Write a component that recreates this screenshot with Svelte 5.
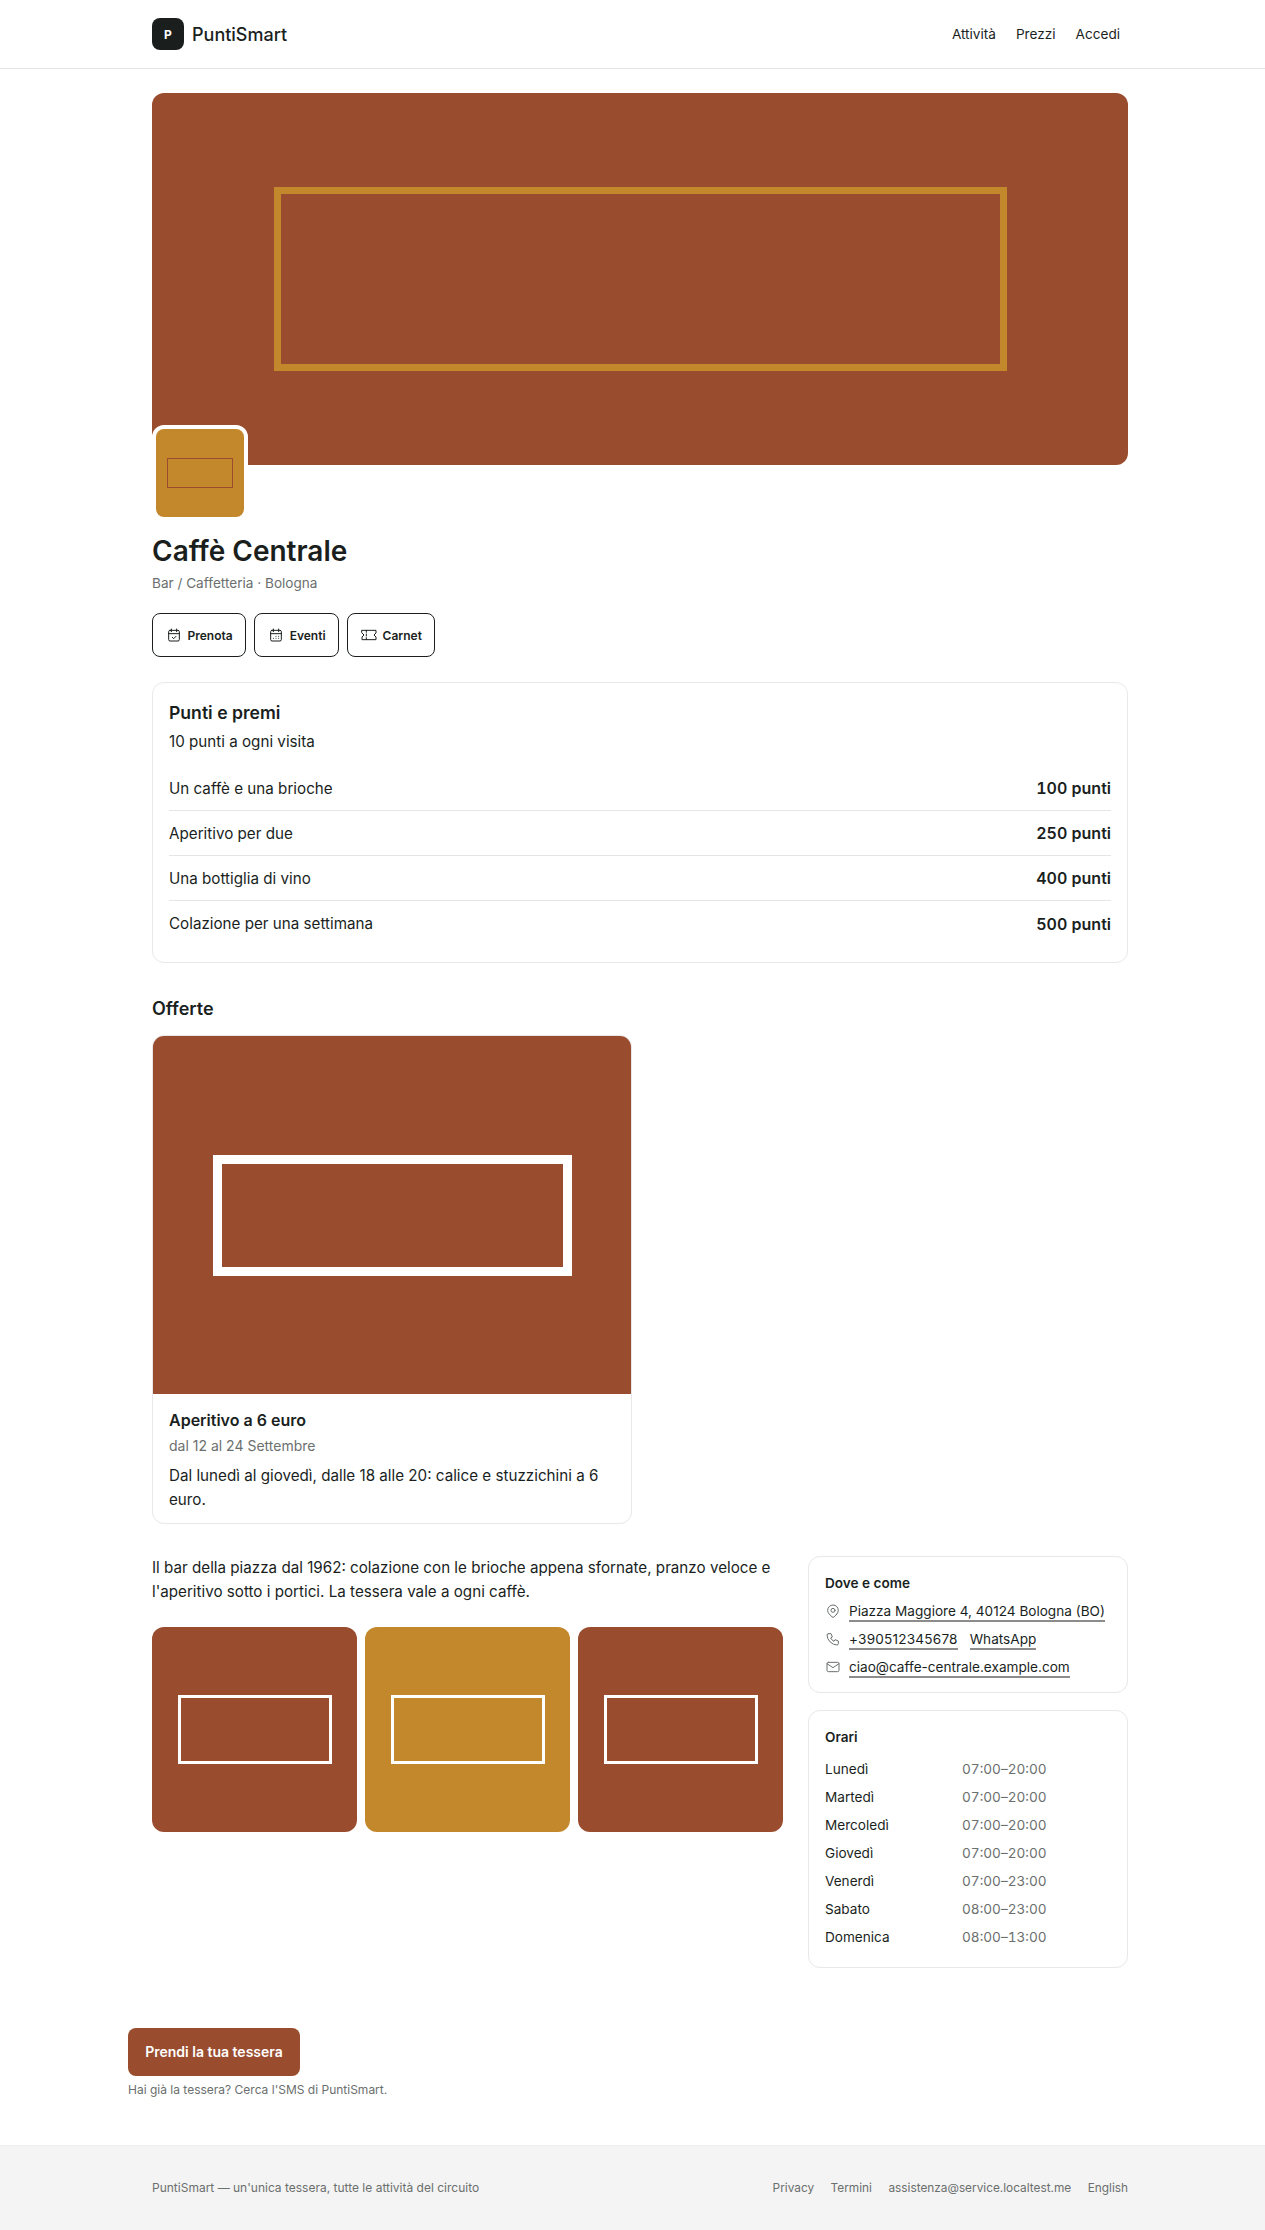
<script>
  const rewards = [
    ['Un caffè e una brioche', '100 punti'],
    ['Aperitivo per due', '250 punti'],
    ['Una bottiglia di vino', '400 punti'],
    ['Colazione per una settimana', '500 punti']
  ];
  const hours = [
    ['Lunedì', '07:00–20:00'],
    ['Martedì', '07:00–20:00'],
    ['Mercoledì', '07:00–20:00'],
    ['Giovedì', '07:00–20:00'],
    ['Venerdì', '07:00–23:00'],
    ['Sabato', '08:00–23:00'],
    ['Domenica', '08:00–13:00']
  ];
</script>

<header class="top">
  <div class="wrap top-in">
    <div class="brand"><span class="mark">P</span><span class="name">PuntiSmart</span></div>
    <nav class="nav"><span>Attività</span><span>Prezzi</span><span>Accedi</span></nav>
  </div>
</header>

<main class="wrap main">
  <div class="hero"><div class="hero-box"></div></div>
  <div class="logo"><div class="logo-box"></div></div>
  <h1>Caffè Centrale</h1>
  <p class="sub">Bar / Caffetteria · Bologna</p>
  <div class="actions">
    <button class="btn">
      <svg viewBox="0 0 24 24" class="bi"><rect x="4" y="5" width="16" height="16" rx="2"/><path d="M16 3v4M8 3v4M4 10h16M9.500 15.500l2 2 3.500-3.500"/></svg>
      Prenota
    </button>
    <button class="btn">
      <svg viewBox="0 0 24 24" class="bi"><rect x="4" y="5" width="16" height="16" rx="2"/><path d="M16 3v4M8 3v4M4 10h16M8 17h.01M12 17h.01M16 17h.01M12 14h.01M16 14h.01"/></svg>
      Eventi
    </button>
    <button class="btn">
      <svg viewBox="0 0 24 24" class="bi"><path d="M1.500 5h21v4l-3 3 3 3v4h-21v-4l3-3-3-3zM8 5v3M8 10.500v3M8 16v3"/></svg>
      Carnet
    </button>
  </div>

  <section class="card points">
    <h2>Punti e premi</h2>
    <p class="earn">10 punti a ogni visita</p>
    <ul class="rewards">
      {#each rewards as r}
        <li><span>{r[0]}</span><strong>{r[1]}</strong></li>
      {/each}
    </ul>
  </section>

  <h2 class="offers-title">Offerte</h2>
  <article class="offer">
    <div class="offer-img"><div class="offer-box"></div></div>
    <div class="offer-body">
      <h3>Aperitivo a 6 euro</h3>
      <p class="dates">dal 12 al 24 Settembre</p>
      <p class="desc">Dal lunedì al giovedì, dalle 18 alle 20: calice e stuzzichini a 6 euro.</p>
    </div>
  </article>

  <div class="cols">
    <div class="left">
      <p class="about">Il bar della piazza dal 1962: colazione con le brioche appena sfornate, pranzo veloce e l'aperitivo sotto i portici. La tessera vale a ogni caffè.</p>
      <div class="gallery">
        <div class="tile"><div class="tile-box"></div></div>
        <div class="tile alt"><div class="tile-box"></div></div>
        <div class="tile"><div class="tile-box"></div></div>
      </div>
    </div>
    <aside class="side">
      <div class="card info contact">
        <h4>Dove e come</h4>
        <div class="line first">
          <svg viewBox="0 0 24 24" class="ii"><circle cx="12" cy="11" r="3"/><path d="M17.660 16.660 13.410 20.900a2 2 0 0 1-2.830 0l-4.240-4.240a8 8 0 1 1 11.320 0z"/></svg>
          <a href="#a">Piazza Maggiore 4, 40124 Bologna (BO)</a>
        </div>
        <div class="line">
          <svg viewBox="0 0 24 24" class="ii"><path d="M5 4h4l2 5-2.500 1.500a11 11 0 0 0 5 5L15 13l5 2v4a2 2 0 0 1-2 2A16 16 0 0 1 3 6a2 2 0 0 1 2-2"/></svg>
          <a href="#a" class="phone">+390512345678</a><a href="#a">WhatsApp</a>
        </div>
        <div class="line">
          <svg viewBox="0 0 24 24" class="ii"><rect x="3" y="5" width="18" height="14" rx="2"/><path d="m3 7 9 6 9-6"/></svg>
          <a href="#a">ciao@caffe-centrale.example.com</a>
        </div>
      </div>
      <div class="card info hours">
        <h4>Orari</h4>
        {#each hours as h}
          <div class="hour"><span class="day">{h[0]}</span><span class="time">{h[1]}</span></div>
        {/each}
      </div>
    </aside>
  </div>

  <div class="cta">
    <button class="cta-btn">Prendi la tua tessera</button>
    <p>Hai già la tessera? Cerca l'SMS di PuntiSmart.</p>
  </div>
</main>

<footer class="foot">
  <div class="wrap foot-in">
    <span>PuntiSmart — un'unica tessera, tutte le attività del circuito</span>
    <nav class="foot-nav"><span>Privacy</span><span>Termini</span><span>assistenza@service.localtest.me</span><span>English</span></nav>
  </div>
</footer>

<style>
  :global(body) {
    margin: 0;
    background: #fff;
    color: #1a1f1e;
    font-family: Inter, "Liberation Sans", sans-serif;
    font-size: 15.2px;
  }
  * { box-sizing: border-box; }
  h1, h2, h3, h4, p, ul { margin: 0; padding: 0; }
  .wrap { width: 976px; margin: 0 137px 0 152px; }
  .top { height: 69px; border-bottom: 1px solid #e5e5e5; }
  .top-in { height: 68px; display: flex; align-items: center; justify-content: space-between; }
  .brand { display: flex; align-items: center; gap: 8px; }
  .mark {
    width: 32px; height: 32px; border-radius: 8px; background: #1a1f1e; color: #fff;
    display: flex; align-items: center; justify-content: center; font-size: 12px; font-weight: 700;
  }
  .name { font-size: 18px; font-weight: 500; }
  .nav { display: flex; gap: 20px; font-size: 13.6px; padding-right: 8px; }
  .main { padding-top: 24px; }
  .hero {
    height: 372px; border-radius: 12px; background: #9a4c2e;
    display: flex; align-items: center; justify-content: center;
  }
  .hero-box { width: 733px; height: 184px; border: 7px solid #c4882c; }
  .logo {
    width: 96px; height: 96px; margin-top: -40px; position: relative;
    border: 4px solid #fff; border-radius: 12px; background: #c4882c;
    display: flex; align-items: center; justify-content: center;
  }
  .logo-box { width: 66px; height: 30px; border: 1px solid #9a4c2e; }
  h1 { font-size: 28px; line-height: 36px; font-weight: 600; margin-top: 12px; }
  .sub { font-size: 13.6px; line-height: 20px; color: #6b6f6e; margin-top: 4px; }
  .actions { display: flex; gap: 8px; margin-top: 20px; }
  .btn {
    height: 44px; padding: 0 12.500px; display: flex; align-items: center; gap: 6px;
    background: #fff; color: #1a1f1e; border: 1px solid #1a1f1e; border-radius: 8px;
    font: 600 12px Inter, sans-serif;
  }
  .bi { width: 16px; height: 16px; fill: none; stroke: currentColor; stroke-width: 1.5; stroke-linecap: round; stroke-linejoin: round; }
  .card { border: 1px solid #e8e8e8; border-radius: 12px; background: #fff; }
  .points { margin-top: 25px; padding: 16px 16px 16px; height: 281px; }
  .points h2 { font-size: 17.6px; line-height: 28px; font-weight: 600; }
  .earn { line-height: 24px; margin-top: 3px; font-size: 15.2px; }
  .rewards { list-style: none; margin-top: 12px; }
  .rewards li {
    display: flex; justify-content: space-between; align-items: center; height: 45px;
    font-size: 15.2px; border-bottom: 1px solid #e5e5e5;
  }
  .rewards li:last-child { border-bottom: 0; }
  .rewards strong { font-weight: 600; font-size: 16px; font-variant-numeric: tabular-nums; }
  .offers-title { font-size: 18px; line-height: 28px; font-weight: 600; margin-top: 32px; }
  .offer { width: 480px; margin-top: 12px; border: 1px solid #e8e8e8; border-radius: 12px; overflow: hidden; }
  .offer-img { height: 358px; background: #9a4c2e; display: flex; align-items: center; justify-content: center; }
  .offer-box { width: 359px; height: 121px; border: 9px solid #fff; }
  .offer-body { padding: 14px 16px 10px; }
  .offer-body h3 { font-size: 16px; line-height: 24px; font-weight: 600; }
  .dates { font-size: 14px; line-height: 20px; color: #6b6f6e; margin-top: 4px; }
  .desc { font-size: 15.2px; line-height: 24.320px; margin-top: 8px; }
  .cols { display: grid; grid-template-columns: 632px 320px; gap: 24px; margin-top: 32px; }
  .about { line-height: 24.320px; font-size: 15.2px; }
  .gallery { display: grid; grid-template-columns: repeat(3, 205px); gap: 8px; margin-top: 23px; }
  .tile { height: 205px; border-radius: 12px; background: #9a4c2e; display: flex; align-items: center; justify-content: center; }
  .tile.alt { background: #c4882c; }
  .tile-box { width: 154px; height: 69px; border: 3px solid #fff; }
  .side { display: flex; flex-direction: column; gap: 17px; }
  .info { padding: 16px; }
  .contact { padding-bottom: 11px; }
  h4 { font-size: 13.6px; line-height: 20px; font-weight: 600; }
  .line { display: flex; align-items: center; gap: 12px; height: 28px; font-size: 13.6px; white-space: nowrap; }
  .line.first { margin-top: 4px; }
  .line a { color: #1a1f1e; text-decoration: none; border-bottom: 2px solid #8c8c8c; line-height: 18px; margin-top: 2px; }
  .line a.phone { letter-spacing: 0.2px; }
  .ii { width: 16px; height: 16px; margin-right: -4px; flex: none; fill: none; stroke: #6b6f6e; stroke-width: 1.5; stroke-linecap: round; stroke-linejoin: round; }
  .hours h4 { margin-bottom: 8px; }
  .hour { display: grid; grid-template-columns: 137px 1fr; height: 28px; align-items: center; font-size: 13.6px; }
  .time { color: #6b6f6e; font-variant-numeric: tabular-nums; }
  .cta { margin: 60px 0 0 -24px; }
  .cta-btn {
    width: 172px; height: 48px; border: 0; border-radius: 8px; background: #9a4c2e; color: #fff;
    font: 600 14px Inter, sans-serif;
  }
  .cta p { font-size: 12px; line-height: 16px; color: #6b6f6e; margin-top: 6px; }
  .foot { margin-top: 47px; height: 85px; background: #f4f4f4; border-top: 1px solid #eee; }
  .foot-in { height: 84px; display: flex; align-items: center; justify-content: space-between; font-size: 12px; color: #6b6f6e; }
  .foot-nav { display: flex; gap: 16.500px; font-size: 11.84px; }
</style>
